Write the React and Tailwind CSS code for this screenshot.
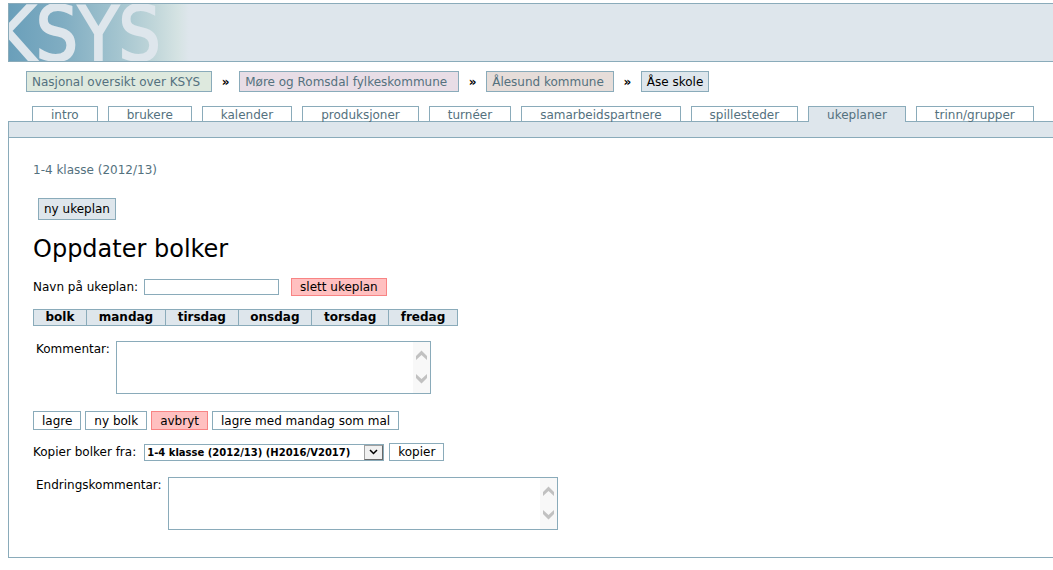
import { useState } from 'react'

const breadcrumbs = [
  { name: 'Nasjonal oversikt over KSYS', style: 'bg-[#dee9de] text-[#54717e] pr-[11px]' },
  { name: 'Møre og Romsdal fylkeskommune', style: 'bg-[#e8dde6] text-[#54717e] pr-[11px]' },
  { name: 'Ålesund kommune', style: 'bg-[#e6ddd9] text-[#54717e] pr-[9px]' },
  { name: 'Åse skole', style: 'bg-[#dee6ec] text-black pr-[5px]' },
]

const tabs = [
  'intro',
  'brukere',
  'kalender',
  'produksjoner',
  'turnéer',
  'samarbeidspartnere',
  'spillesteder',
  'ukeplaner',
  'trinn/grupper',
]

const days = ['bolk', 'mandag', 'tirsdag', 'onsdag', 'torsdag', 'fredag']

function Logo() {
  return (
    <svg width="180" height="57" viewBox="0 0 180 57" role="img" aria-label="KSYS" className="block">
      <defs>
        <linearGradient id="fade" x1="0" y1="0" x2="1" y2="0">
          <stop offset="0" stopColor="#6a9fba" />
          <stop offset="0.3" stopColor="#80adc2" />
          <stop offset="0.6" stopColor="#a3c4cf" />
          <stop offset="0.82" stopColor="#c2d7da" />
          <stop offset="0.94" stopColor="#d5e3e3" />
          <stop offset="1" stopColor="#dee6ec" />
        </linearGradient>
      </defs>
      <rect width="180" height="57" fill="url(#fade)" />
      <text
        x="-17"
        y="56"
        fontSize="74"
        fontFamily="'DejaVu Sans Condensed', 'Arial Narrow', sans-serif"
        fill="#dee6ec"
        stroke="#dee6ec"
        strokeWidth="2"
      >
        KSYS
      </text>
    </svg>
  )
}

function Button({ children, danger }) {
  return (
    <button
      type="button"
      className={
        danger
          ? 'border border-[#f88484] bg-[#ffc0c0] px-2 leading-4'
          : 'border border-[#8aabba] bg-white px-2 leading-4'
      }
    >
      {children}
    </button>
  )
}

function CommentBox({ id, label, width }) {
  return (
    <div className="flex items-start gap-[6px] pl-[3px]">
      <label htmlFor={id}>{label}</label>
      <div className={'flex h-[53px] border border-[#8aabba] ' + width}>
        <textarea id={id} className="min-w-0 flex-1 resize-none overflow-hidden outline-none" />
        <svg width="17" height="51" viewBox="0 0 17 51" className="shrink-0 bg-[#f8f8f8]" aria-hidden="true">
          <path d="M3 14L8.500 8.500L14 14V18L8.500 13L3 18ZM3 32L8.500 37L14 32V36L8.500 41.500L3 36Z" fill="#c1c1c1" />
        </svg>
      </div>
    </div>
  )
}

export default function App() {
  const [name, setName] = useState('')

  return (
    <div className="bg-white pt-[3px] pb-3 pl-2 font-['Verdana','DejaVu_Sans',sans-serif] text-[12px] leading-4 text-black">
      <header className="border-y border-l border-[#8aabba] bg-[#dee6ec]">
        <Logo />
      </header>

      <nav className="mt-[9px] ml-[18px] flex items-center">
        {breadcrumbs.map((item, i) => (
          <div key={item.name} className="flex items-center">
            {i > 0 && <span className="w-[27px] text-center font-bold">»</span>}
            <a href="#" className={'h-[21px] border border-[#8aabba] pl-[5px] leading-5 ' + item.style}>
              {item.name}
            </a>
          </div>
        ))}
      </nav>

      <nav className="mt-[14px] ml-6 flex gap-[10px]">
        {tabs.map((tab) => (
          <a
            key={tab}
            href="#"
            className={
              tab === 'ukeplaner'
                ? 'relative -mb-px h-4 border border-b-0 border-[#8aabba] bg-[#dee6ec] px-[18px] text-[#54717e]'
                : 'h-[15px] border border-b-0 border-[#8aabba] px-[18px] text-[#54717e]'
            }
          >
            {tab}
          </a>
        ))}
      </nav>

      <main className="border-y border-l border-[#8aabba]">
        <div className="h-4 border-b border-[#8aabba] bg-[#dee6ec]" />
        <div className="px-6 pt-6 pb-[27px]">
          <a href="#" className="block text-[#54717e]">
            1-4 klasse (2012/13)
          </a>
          <button type="button" className="mt-5 ml-[5px] block h-[22px] border border-[#8aabba] bg-[#dee6ec] px-[5px]">
            ny ukeplan
          </button>
          <h1 className="mt-[13px] text-[24px] leading-8">Oppdater bolker</h1>

          <div className="mt-[13px] flex items-center">
            <label htmlFor="name">Navn på ukeplan:</label>
            <input
              id="name"
              type="text"
              value={name}
              onChange={(e) => setName(e.target.value)}
              className="mr-3 ml-[6px] h-4 w-[135px] border border-[#8aabba] outline-none"
            />
            <Button danger>slett ukeplan</Button>
          </div>

          <table className="mt-[13px] w-[425px] border-collapse">
            <thead>
              <tr>
                {days.map((day) => (
                  <th key={day} scope="col" className="border border-[#8aabba] bg-[#dee6ec] px-[11px] py-0 leading-[15px]">
                    {day}
                  </th>
                ))}
              </tr>
            </thead>
          </table>

          <div className="mt-[15px]">
            <CommentBox id="comment" label="Kommentar:" width="w-[315px]" />
          </div>

          <div className="mt-[17px] flex h-[19px] gap-1">
            <Button>lagre</Button>
            <Button>ny bolk</Button>
            <Button danger>avbryt</Button>
            <Button>lagre med mandag som mal</Button>
          </div>

          <div className="mt-[13px] flex items-center">
            <label htmlFor="copy">Kopier bolker fra:</label>
            <div className="relative mr-[5px] ml-2">
              <select
                id="copy"
                className="block h-[17px] w-60 appearance-none border border-[#8aabba] bg-white pl-[2px] text-[10px] leading-[15px] font-bold"
              >
                <option>1-4 klasse (2012/13) (H2016/V2017)</option>
              </select>
              <span className="pointer-events-none absolute top-px right-px flex h-[15px] w-[19px] items-center justify-center border border-[#a0a0a0] border-r-[#696969] border-b-[#696969] bg-[#f0f0f0]">
                <svg width="9" height="6" viewBox="0 0 9 6" aria-hidden="true">
                  <path d="M1 1L4.500 4.500L8 1" fill="none" stroke="#000" strokeWidth="1.500" />
                </svg>
              </span>
            </div>
            <Button>kopier</Button>
          </div>

          <div className="mt-4">
            <CommentBox id="change" label="Endringskommentar:" width="w-[390px]" />
          </div>
        </div>
      </main>
    </div>
  )
}
